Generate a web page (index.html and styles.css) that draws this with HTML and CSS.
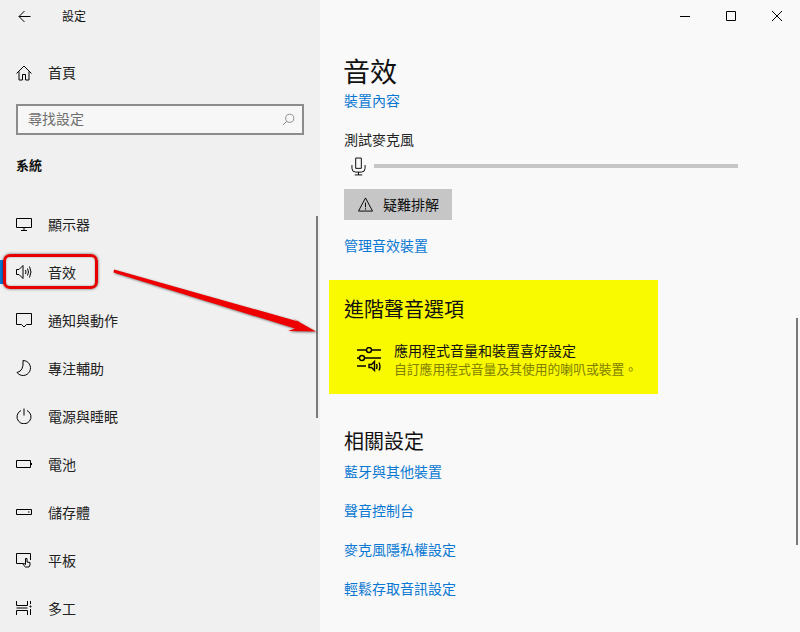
FILE: index.html
```html
<!DOCTYPE html>
<html lang="zh-Hant">
<head>
    <meta charset="UTF-8">
    <title>設定</title>
    <link rel="stylesheet" href="styles.css">
</head>
<body>

    <div class="app">
        <aside class="sidebar">
            <div class="sidebar-head">
                <svg class="icon back" viewBox="0 0 13 13"><path d="M12.500 6.500H1M6.500 1 1 6.500 6.500 12"/></svg>
                <span class="app-title">設定</span>
            </div>
            <div class="nav-item home">
                <svg class="icon" viewBox="0 0 16 16"><path d="M.5 8.500 8 1l7.500 7.500M3 6.500v8.500h3.500V9.500h3V15H13V6.500"/></svg>
                <span>首頁</span>
            </div>
            <div class="search">
                <span>尋找設定</span>
                <svg class="icon search-icon" viewBox="0 0 16 16"><circle cx="9.500" cy="6.500" r="5"/><path d="M6 10 1 15"/></svg>
            </div>
            <h2 class="section-name">系統</h2>
            <nav class="nav-list">
                <div class="nav-item">
                    <svg class="icon" viewBox="0 0 16 16"><path d="M.5 2.500h15v9H.5zM8 11.500v2.500M5 14.500h6"/></svg>
                    <span>顯示器</span>
                </div>
                <div class="nav-item active">
                    <svg class="icon" viewBox="0 0 16 16"><path d="M.5 5.500h2.500L7 1.500v13l-4-4H.5zM9.500 6q1 2 0 4M11.500 4.500q2 3.500 0 7M13.500 2.500q3 5.500 0 11"/></svg>
                    <span>音效</span>
                </div>
                <div class="nav-item">
                    <svg class="icon" viewBox="0 0 16 16"><path d="M.5 1.500h15v11h-5L8 15l-2.500-2.500h-5z"/></svg>
                    <span>通知與動作</span>
                </div>
                <div class="nav-item">
                    <svg class="icon" viewBox="0 0 16 16"><path d="M7 .5A7.500 7.500 0 1 1 1 12.500Q8 11 7 .5z"/></svg>
                    <span>專注輔助</span>
                </div>
                <div class="nav-item">
                    <svg class="icon" viewBox="0 0 16 16"><path d="M5 2.500a7 7 0 1 0 6 0M8 .5v7"/></svg>
                    <span>電源與睡眠</span>
                </div>
                <div class="nav-item">
                    <svg class="icon" viewBox="0 0 16 16"><path d="M.5 4.500h14v7H.5zM15.500 7v2"/></svg>
                    <span>電池</span>
                </div>
                <div class="nav-item">
                    <svg class="icon" viewBox="0 0 16 16"><path d="M.5 5.500h15v5H.5zM12 8h1.500"/></svg>
                    <span>儲存體</span>
                </div>
                <div class="nav-item">
                    <svg class="icon" viewBox="0 0 16 16"><path d="M7 11.500H.5v-10h14V8M9.500 15q-2-1.500-2.500-3l1-.5 1.500 1V6.500h1.500V10l3 .5v2.500l-1 2z"/></svg>
                    <span>平板</span>
                </div>
                <div class="nav-item">
                    <svg class="icon" viewBox="0 0 16 16"><path d="M.5 1v4.500h11V1M.5 15v-4.500h11V15M.5 8h11M14.500 1v3M14.500 9v6M14 6h1v1h-1z"/></svg>
                    <span>多工</span>
                </div>
            </nav>
        </aside>

        <main class="content">
            <div class="window-controls">
                <div class="win-btn"><svg class="icon" viewBox="0 0 10 10"><path d="M0 5.500h10"/></svg></div>
                <div class="win-btn"><svg class="icon" viewBox="0 0 10 10"><path d="M.5.5h9v9h-9z"/></svg></div>
                <div class="win-btn"><svg class="icon" viewBox="0 0 10 10"><path d="m0 0 10 10M10 0 0 10"/></svg></div>
            </div>

            <h1 class="page-title">音效</h1>
            <a class="link">裝置內容</a>

            <p class="label">測試麥克風</p>
            <div class="meter-row">
                <svg class="icon mic" viewBox="0 0 16 20"><path d="M5 1.500h6v11H5zM1 9v3.500a4 4 0 0 0 4 4h6a4 4 0 0 0 4-4V9M8 16.500v3M4 19.500h8"/></svg>
                <div class="meter"></div>
            </div>
            <div class="trouble-btn">
                <svg class="icon warn" viewBox="0 0 16 16"><path d="M8 1 .5 15h15zM8 6v5M8 12v1.500"/></svg>
                <span>疑難排解</span>
            </div>
            <a class="link manage">管理音效裝置</a>

            <section class="advanced">
                <h2 class="sub-title">進階聲音選項</h2>
                <div class="advanced-item">
                    <svg class="icon sliders" viewBox="0 0 24 25"><path d="M0 3h9.500M14.500 3H24M0 11h2.500M7.500 11H24M0 19h9"/><circle cx="12" cy="3" r="2.500"/><circle cx="5" cy="11" r="2.500"/><path d="M12 17.500h2.500l3-3v9l-3-3H12zM19.500 17q1 2.500 0 5M22 15.500q2 4 0 8"/></svg>
                    <div>
                        <p class="item-name">應用程式音量和裝置喜好設定</p>
                        <p class="item-desc">自訂應用程式音量及其使用的喇叭或裝置。</p>
                    </div>
                </div>
            </section>

            <h2 class="sub-title related">相關設定</h2>
            <div class="related-links">
                <a class="link">藍牙與其他裝置</a>
                <a class="link">聲音控制台</a>
                <a class="link">麥克風隱私權設定</a>
                <a class="link">輕鬆存取音訊設定</a>
            </div>
        </main>
    </div>

    <div class="scrollbar scroll-nav"></div>
    <div class="scrollbar scroll-main"></div>

    <!-- red annotation on top of the screenshot -->
    <div class="mark-box"></div>
    <svg class="mark-arrow" viewBox="0 0 800 632">
        <path d="M114 269.500 300 322 292 318 316 331.500 288 331 295 328.500 113.500 272.500z"/>
    </svg>

</body>
</html>
```

FILE: styles.css
```css
:root {
    --color-side: #f0f0f0;
    --color-main: #f9f9f9;
    --color-link: #0a78d2;
    --color-btn: #c6c6c6;
    --color-yellow: #f9f900;
    --fuente: "Noto Sans CJK TC", "Noto Sans", sans-serif;
}

* {
    margin: 0; padding: 0; box-sizing: border-box;
}

body {
    font-family: var(--fuente);
    font-size: 14px;
    line-height: 20px;
    color: #111;
    background-color: var(--color-main);
    overflow: hidden;
}

.app {
    display: flex;
    width: 800px; height: 632px;
    overflow: hidden;
}

.icon {
    display: block;
    width: 16px; height: 16px;
    flex: none;
    fill: none;
    stroke: #000;
    stroke-width: 1;
}

/* ===== sidebar ===== */
.sidebar {
    width: 320px; flex: none;
    background-color: var(--color-side);
    overflow: hidden;
}

.sidebar-head {
    display: flex; align-items: center;
    height: 32px; padding-left: 18px;
}
.back { width: 13px; height: 13px; }
.app-title { font-size: 12px; margin-left: 31px; }

.home { margin-top: 17px; }
.home span { padding-bottom: 2px; }

.search {
    display: flex; align-items: center; justify-content: space-between;
    height: 31px; margin: 7px 16px 0 16px; padding: 0 7px 0 10px;
    background-color: #f7f7f7;
    border: 2px solid #8c8c8c;
    color: #6e6e6e;
}
.search span { padding-bottom: 3px; }
.search-icon { width: 13px; height: 13px; stroke: #777; }

.section-name {
    font-size: 13px; font-weight: 700;
    line-height: 28px;
    margin: 16px 0 0 16px;
}

.nav-list { margin-top: 21px; }

.nav-item {
    display: flex; align-items: center; gap: 16px;
    height: 48px; padding-left: 16px;
    position: relative;
    color: #222;
}

.active::before {
    content: "";
    position: absolute; left: 0; top: 12px;
    width: 4px; height: 24px;
    background-color: #0a78d2;
}

/* ===== main panel ===== */
.content {
    flex: 1;
    padding-left: 24px;
    background-color: var(--color-main);
}

.window-controls {
    display: flex; justify-content: flex-end;
    height: 32px;
}
.win-btn {
    display: flex; align-items: center; justify-content: center;
    width: 46px; height: 32px;
}
.win-btn .icon { width: 10px; height: 10px; }

.page-title {
    font-size: 27px; font-weight: 400;
    line-height: 40px;
    margin: 19px 0 0 -1px;
}

.link {
    display: block;
    line-height: 18px; padding-bottom: 2px;
    color: var(--color-link);
}

.label {
    line-height: 18px; padding-bottom: 2px;
    margin-top: 19px;
    color: #222;
}

.meter-row {
    display: flex; align-items: center;
    height: 24px; margin-top: 4px; padding-left: 7px;
}
.mic { width: 15px; height: 20px; }
.meter {
    width: 364px; height: 4px; margin-left: 8px;
    background-color: var(--color-btn);
}

.trouble-btn {
    display: flex; align-items: center; gap: 10px;
    width: 108px; height: 31px; margin-top: 11px; padding-left: 14px;
    background-color: var(--color-btn);
}
.trouble-btn span { padding-bottom: 2px; }
.warn { width: 15px; height: 15px; }

.manage { margin-top: 16px; }

.advanced {
    width: 329px; height: 114px;
    margin: 24px 0 0 -15px;
    padding: 19px 0 0 15px;
    background-color: var(--color-yellow);
}

.sub-title {
    font-size: 20px; font-weight: 400;
    line-height: 20px;
    color: #111;
}

.advanced-item {
    display: flex; align-items: center;
    margin-top: 22px; padding-left: 13px;
}
.sliders { width: 24px; height: 25px; margin-right: 13px; stroke-width: 1.4; }
.item-name { line-height: 19px; }
.item-desc { font-size: 12.8px; line-height: 18px; color: #808000; }

.related { line-height: 30px; margin-top: 32px; }

.related-links {
    display: flex; flex-direction: column; gap: 19px;
    margin-top: 6px;
}

/* ===== overlays ===== */
.scrollbar {
    position: absolute;
    width: 2px;
    background-color: #7a7a7a;
}
.scroll-nav { left: 316px; top: 216px; height: 202px; }
.scroll-main { left: 796px; top: 318px; height: 227px; }

.mark-box {
    position: absolute; left: 3px; top: 254px;
    width: 95px; height: 35px;
    border: 3px solid #e60000;
    border-radius: 7px;
    box-shadow: 0 0 3px rgba(0, 0, 0, 0.6), inset 0 0 2px rgba(0, 0, 0, 0.4);
}

.mark-arrow {
    position: absolute; left: 0; top: 0;
    width: 800px; height: 632px;
    pointer-events: none;
    fill: #ee0000;
    filter: drop-shadow(1px 1px 1px rgba(0, 0, 0, 0.5));
}
```
